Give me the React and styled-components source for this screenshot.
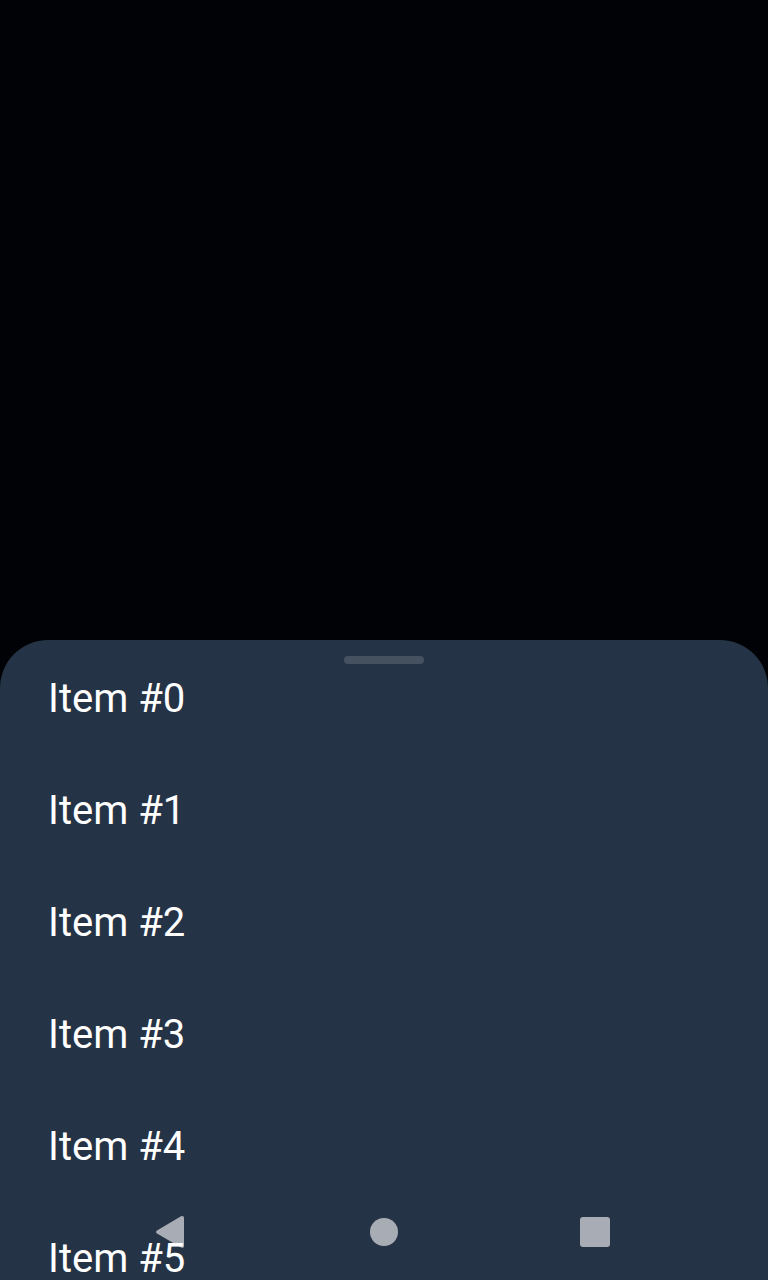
import React from 'react';
import styled, { createGlobalStyle } from 'styled-components';

const GlobalStyle = createGlobalStyle`
  *, *::before, *::after { box-sizing: border-box; }
  body { margin: 0; background: #000205; overflow: hidden; }
`;

const Screen = styled.div`
  position: relative;
  display: flex;
  flex-direction: column;
  justify-content: flex-end;
  width: 768px;
  height: 1280px;
  overflow: hidden;
  background: #000205;
  font-family: Roboto, sans-serif;
`;

const Sheet = styled.section`
  display: flex;
  flex-direction: column;
  height: 640px;
  padding-top: 16px;
  overflow: hidden;
  border-radius: 48px 48px 0 0;
  background: #253346;
`;

const Handle = styled.div`
  flex: none;
  align-self: center;
  width: 80px;
  height: 8px;
  border-radius: 4px;
  background: #465160;
`;

const List = styled.ul`
  flex: none;
  margin: -21px 0 0;
  padding: 0;
  list-style: none;
`;

const Item = styled.li`
  display: flex;
  align-items: center;
  height: 112px;
  padding: 0 48px;
  color: #fff;
  font-size: 40px;
  line-height: 48px;
`;

const NavBar = styled.nav`
  position: absolute;
  left: 0;
  right: 0;
  bottom: 0;
  display: flex;
  justify-content: center;
  gap: 115px;
  height: 96px;
`;

const NavButton = styled.button`
  width: 96px;
  height: 96px;
  padding: 0;
  border: 0;
  background: none;
`;

const NavIcon = styled.svg`
  display: block;
  width: 96px;
  height: 96px;
  fill: #fff;
  opacity: 0.6;
`;

const items = [0, 1, 2, 3, 4, 5];

export default function App() {
  return (
    <Screen>
      <GlobalStyle />
      <Sheet>
        <Handle />
        <List>
          {items.map((n) => (
            <Item key={n}>Item #{n}</Item>
          ))}
        </List>
      </Sheet>
      <NavBar>
        <NavButton aria-label="Back">
          <NavIcon viewBox="0 0 96 96">
            <path d="M32 46.4 56 32.2Q59 31.2 59 34V62Q59 64.8 56 63.4L32 49.5Q30 48 32 46.4Z" />
          </NavIcon>
        </NavButton>
        <NavButton aria-label="Home">
          <NavIcon viewBox="0 0 96 96">
            <circle cx="48" cy="48" r="14" />
          </NavIcon>
        </NavButton>
        <NavButton aria-label="Recents">
          <NavIcon viewBox="0 0 96 96">
            <rect x="33" y="33" width="30" height="30" rx="3" />
          </NavIcon>
        </NavButton>
      </NavBar>
    </Screen>
  );
}
